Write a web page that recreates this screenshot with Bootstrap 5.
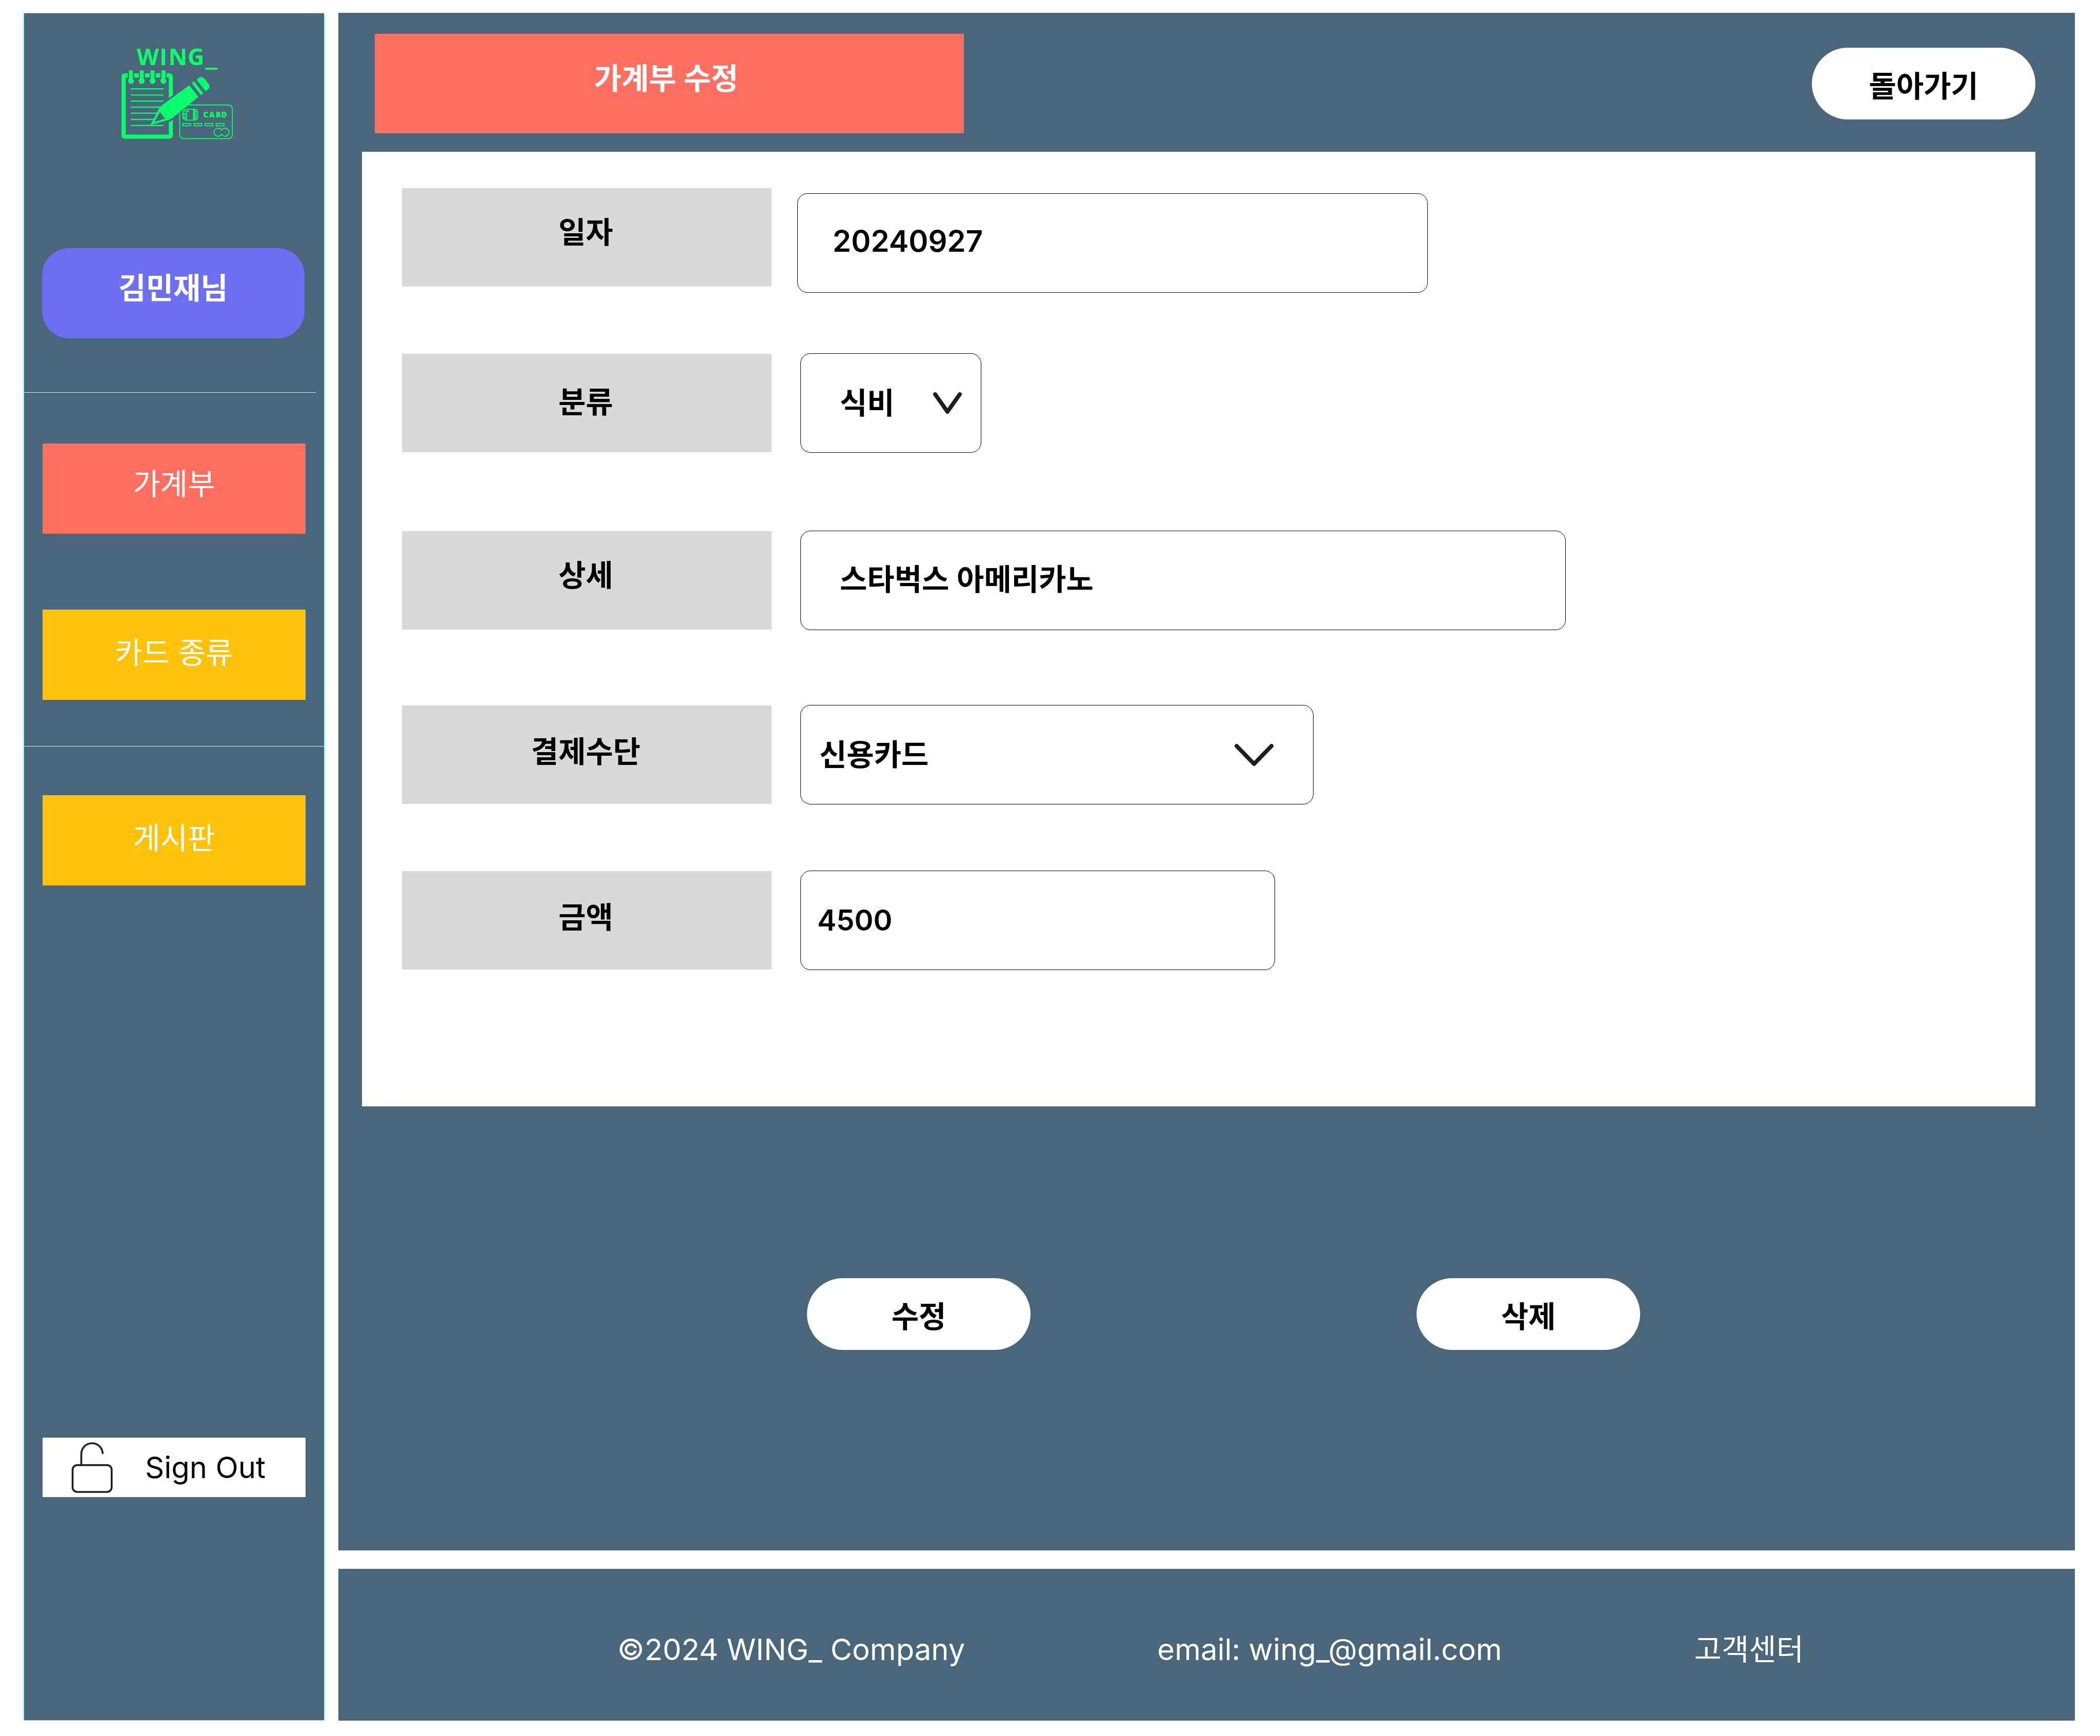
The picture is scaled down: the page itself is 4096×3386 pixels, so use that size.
<!DOCTYPE html>
<html lang="ko">
<head>
<meta charset="utf-8">
<meta name="viewport" content="width=device-width, initial-scale=1">
<title>WING_ 가계부 수정</title>
<link href="https://cdn.jsdelivr.net/npm/bootstrap@5.3.0/dist/css/bootstrap.min.css" rel="stylesheet">
<style>
:root { --slate: #4a667a; --coral: #ff7062; --amber: #ffc20a; --violet: #6c70f0; --ink: #1e1e1e; }
body { font-family: Inter, "Noto Sans CJK KR", sans-serif; font-size: 58px; line-height: 70px; color: #000; background: #fff; }
.app-shell { padding: 25px 49px 30px 46px; gap: 27px; }
.side-panel { width: 587px; background: var(--slate); border: 1px solid #7cf0dc; padding: 34px 0 435px; }
.brand-mark { width: 218px; height: 212px; margin: 0 0 212px 190px; }
.side-btn { height: 176px; margin: 0 36px; border: 0; border-radius: 0; padding: 0 0 8px; font-size: 58px; line-height: 70px; color: #fff; display: flex; align-items: center; justify-content: center; text-decoration: none; }
.side-btn.user-pill { border-radius: 53px; background: var(--violet); font-weight: 600; padding-bottom: 20px; margin-right: 38px; margin-left: 35px; }
.side-btn.is-current { background: var(--coral); padding-bottom: 18px; }
.side-btn.is-other { background: var(--amber); }
.side-rule { height: 1px; border: 0; opacity: 1; background: rgba(255,255,255,.9); margin: 105px 16px 99px 0; }
.side-rule.rule-wide { margin: 90px 0 95px; }
.nav-stack { gap: 148px; }
.sign-out { height: 116px; margin: 0 36px; padding: 0 0 0 56px; gap: 62px; border: 0; background: #fff; color: #000; font-size: 58px; line-height: 70px; }
.lock-icon { width: 82px; height: 101px; }
.main-col { gap: 36px; min-width: 0; }
.work-area { background: var(--slate); padding: 41px 77px 0 46px; }
.title-row { padding-left: 25px; margin-bottom: 36px; }
.page-title { width: 1149px; height: 194px; background: var(--coral); color: #fff; font-size: 58px; line-height: 70px; font-weight: 600; padding: 0 12px 20px 0; margin: 0; }
.pill-btn { width: 436px; height: 140px; border: 0; border-radius: 70px; background: #fff; color: #000; font-size: 58px; line-height: 70px; font-weight: 600; padding: 10px 0 0; }
.edit-form { background: #fff; padding: 71px 78px 266px; }
.entry-row { gap: 56px; }
.entry-row.row-date { height: 204px; gap: 50px; }
.entry-label { width: 721px; height: 192px; background: #d9d9d9; font-weight: 600; padding: 0 4px 4px 0; }
.entry-label.lift-sm { padding-bottom: 12px; }
.entry-label.lift-lg { padding-bottom: 20px; }
.entry-field.form-control, .entry-field.form-select { height: 194px; border: 1px solid #000; border-radius: 20px; font-size: 58px; line-height: 70px; font-weight: 600; color: #000; background-color: #fff; padding: 0 36px; }
.entry-field.form-control.inset-wide { padding: 0 76px 12px; }
.entry-field.form-select.inset-wide { padding-left: 76px; padding-right: 90px; }
.entry-field.form-control.inset-date { padding: 0 68px 8px; }
.entry-field.form-control.w-amount { padding: 0 32px; font-size: 56px; }
.w-date { width: 1230px; } .w-kind { width: 353px; } .w-detail { width: 1493px; } .w-pay { width: 1001px; } .w-amount { width: 926px; }
.entry-field.w-kind { background-size: 56px 42px; background-position: right 37px center; background-image: url("data:image/svg+xml,%3Csvg xmlns='http://www.w3.org/2000/svg' viewBox='0 0 56 42'%3E%3Cpath d='M4 4L28 38L52 4' fill='none' stroke='%231e1e1e' stroke-width='8' stroke-linecap='round' stroke-linejoin='round'/%3E%3C/svg%3E"); }
.entry-field.w-pay { background-size: 76px 43px; background-position: right 77px center; background-image: url("data:image/svg+xml,%3Csvg xmlns='http://www.w3.org/2000/svg' viewBox='0 0 76 43'%3E%3Cpath d='M4 4L38 39L72 4' fill='none' stroke='%231e1e1e' stroke-width='8' stroke-linecap='round' stroke-linejoin='round'/%3E%3C/svg%3E"); }
.gap-a { margin-bottom: 118px; } .gap-b { margin-bottom: 152px; } .gap-c { margin-bottom: 146px; } .gap-d { margin-bottom: 129px; }
.form-actions { padding: 335px 0 335px 868px; gap: 753px; }
.site-footer { height: 296px; background: var(--slate); color: #fff; padding: 18px 77px 0 544px; gap: 375px; }
</style>
</head>
<body>
<div class="app-shell d-flex min-vh-100">
  <aside class="side-panel d-flex flex-column flex-shrink-0">
    <svg class="brand-mark flex-shrink-0" viewBox="60 -74 720 700" role="img" aria-label="WING_" fill="#0aff6c">
      <g font-family="'Open Sans', sans-serif" font-weight="700">
        <text y="148" x="158 305 363 486" font-size="148">WING</text>
        <text y="147" x="600" font-size="190">_</text>
        <text y="484" x="587 624 667 702" font-size="50" font-weight="800">CARD</text>
      </g>
      <!-- notepad -->
      <path d="M100 200H82Q60 202 60 224V598Q60 621 84 621H368Q391 621 391 598V501L365 514V595H87V227H100ZM350 200H368Q391 202 391 224V341L365 361V227H350Z"/>
      <path d="M141 200h30v27h-30zM211 200h30v27h-30zM280 200h30v27h-30z"/>
      <g>
        <path d="M108 181h25v50h-25zM178 181h25v50h-25zM247 181h25v50h-25zM318 181h25v50h-25z"/>
        <circle cx="121" cy="249" r="19"/><circle cx="190" cy="249" r="19"/><circle cx="260" cy="249" r="19"/><circle cx="330" cy="249" r="19"/>
      </g>
      <path d="M120 300H331M120 340H331M120 379H331M120 418H318M120 457H292M120 497H268M120 536H331" stroke="#0aff6c" stroke-width="8" fill="none"/>
      <!-- pencil -->
      <path fill-rule="evenodd" d="M497 277L555 352L392 484Q376 498 352 504L246 532L302 428Q308 414 322 405ZM307 449L271 514L342 492Z"/>
      <path d="M512 263L528 252L587 329L572 341ZM543 241L556 230Q573 217 592 231L620 267Q633 286 621 302L602 316Z"/>
      <!-- card -->
      <g fill="none" stroke="#0aff6c" stroke-width="6">
        <path d="M492 404H746Q774 404 774 432V594Q774 621 746 621H462Q435 621 435 594V450"/>
        <rect x="455" y="431" width="96" height="71" rx="22"/>
        <path d="M479 502V452M482 447H490V435M524 431V502M530 431V502M456 458H482M456 469H475M456 482H475M456 490H482M530 446H548M530 458H551M530 470H551M530 482H551M530 491H547M462 443H490"/>
        <path d="M455 523h50v15h-50zM527 523h50v15h-50zM598 523h50v15h-50zM670 523h50v15h-50z"/>
        <path d="M705 567A26 26 0 1 0 705 592A26 26 0 1 0 705 567"/>
      </g>
    </svg>
    <a href="#" class="side-btn user-pill">김민재님</a>
    <hr class="side-rule">
    <nav class="nav-stack d-flex flex-column">
      <a href="#" class="side-btn is-current" aria-current="page">가계부</a>
      <a href="#" class="side-btn is-other">카드 종류</a>
    </nav>
    <hr class="side-rule rule-wide">
    <a href="#" class="side-btn is-other">게시판</a>
    <button type="button" class="sign-out d-flex align-items-center mt-auto">
      <svg class="lock-icon" viewBox="70 68 270 334" fill="none" stroke="#1e1e1e" stroke-width="12" aria-hidden="true">
        <rect x="78" y="219" width="252" height="173" rx="30"/>
        <path d="M134 219V152C134 107 164 78 204 78C239 78 268 103 272 142" stroke-linecap="round"/>
      </svg>
      <span>Sign Out</span>
    </button>
  </aside>

  <div class="main-col d-flex flex-column flex-grow-1">
    <main class="work-area flex-grow-1">
      <div class="title-row d-flex align-items-center justify-content-between">
        <h1 class="page-title d-flex align-items-center justify-content-center">가계부 수정</h1>
        <button type="button" class="pill-btn">돌아가기</button>
      </div>
      <form class="edit-form" id="entry-form">
        <div class="entry-row row-date d-flex gap-a">
          <label for="f-date" class="entry-label lift-lg d-flex align-items-center justify-content-center">일자</label>
          <input id="f-date" type="text" class="entry-field form-control w-date inset-date align-self-end" value="20240927">
        </div>
        <div class="entry-row d-flex align-items-center gap-b">
          <label for="f-kind" class="entry-label d-flex align-items-center justify-content-center">분류</label>
          <select id="f-kind" class="entry-field form-select w-kind inset-wide"><option>식비</option></select>
        </div>
        <div class="entry-row d-flex align-items-center gap-c">
          <label for="f-detail" class="entry-label lift-lg d-flex align-items-center justify-content-center">상세</label>
          <input id="f-detail" type="text" class="entry-field form-control w-detail inset-wide" value="스타벅스 아메리카노">
        </div>
        <div class="entry-row d-flex align-items-center gap-d">
          <label for="f-pay" class="entry-label lift-sm d-flex align-items-center justify-content-center">결제수단</label>
          <select id="f-pay" class="entry-field form-select w-pay"><option>신용카드</option></select>
        </div>
        <div class="entry-row d-flex align-items-center">
          <label for="f-amount" class="entry-label lift-sm d-flex align-items-center justify-content-center">금액</label>
          <input id="f-amount" type="text" inputmode="numeric" class="entry-field form-control w-amount" value="4500">
        </div>
      </form>
      <div class="form-actions d-flex">
        <button type="submit" form="entry-form" class="pill-btn">수정</button>
        <button type="button" class="pill-btn">삭제</button>
      </div>
    </main>
    <footer class="site-footer d-flex align-items-center">
      <span>©2024 WING_ Company</span>
      <span>email: wing_@gmail.com</span>
      <a href="#" class="text-white text-decoration-none">고객센터</a>
    </footer>
  </div>
</div>
<script src="https://cdn.jsdelivr.net/npm/bootstrap@5.3.0/dist/js/bootstrap.bundle.min.js"></script>
</body>
</html>
